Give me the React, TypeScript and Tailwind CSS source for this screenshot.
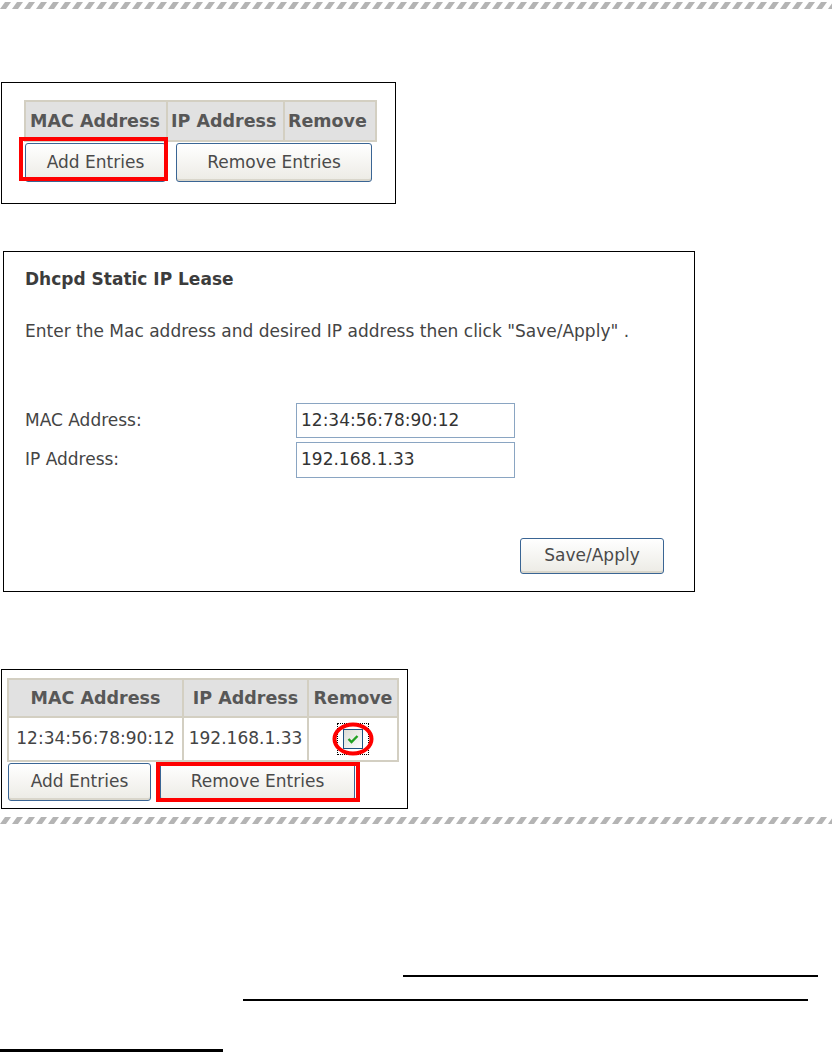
import React from 'react'

const font = { fontFamily: '"DejaVu Sans", Verdana, sans-serif' }

const Stripe = ({ id }: { id: string }) => (
  <svg width="832" height="7" className="block">
    <defs>
      <pattern id={id} width="12" height="7" patternUnits="userSpaceOnUse">
        <polygon points="0,7 5,0 11,0 6,7" fill="#b4b4b4" />
      </pattern>
    </defs>
    <rect width="832" height="7" fill={`url(#${id})`} />
  </svg>
)

const Btn = ({ children, className = '' }: { children: React.ReactNode; className?: string }) => (
  <button
    className={
      'flex items-center justify-center rounded-[3px] border border-[#3a6594] bg-gradient-to-b from-white to-[#ecebe5] text-[17px] text-[#4a4a4a] shadow-[inset_0_-2px_0_#d9d6cb] ' +
      className
    }
  >
    {children}
  </button>
)

const Head = ({ children, className = '' }: { children: React.ReactNode; className?: string }) => (
  <div className={'flex items-center bg-[#e1e1e1] text-[17.5px] font-bold text-[#575757] ' + className}>{children}</div>
)

// checked box with dotted focus ring and the red callout ellipse
const Checkbox = () => (
  <span className="relative inline-flex border border-dotted border-black p-[5px]">
    <span className="flex h-[20px] w-[20px] items-center justify-center border border-[#1c5180] bg-gradient-to-br from-[#dcdcd5] to-white">
      <svg width="12" height="10" viewBox="0 0 12 10">
        <path d="M1.5 5 L4.5 8 L10.5 2" fill="none" stroke="#21a121" strokeWidth="2.4" />
      </svg>
    </span>
    <svg className="absolute left-[-6px] top-[-2px]" width="43" height="34" viewBox="0 0 43 34">
      <ellipse cx="21" cy="17" rx="18.5" ry="14.5" fill="none" stroke="#ff0000" strokeWidth="4" />
    </svg>
  </span>
)

export default function App() {
  return (
    <div className="relative h-[1053px] w-[832px] overflow-hidden bg-white" style={font}>
      <div className="pt-[2px]">
        <Stripe id="s1" />
      </div>

      {/* entries table (empty) */}
      <div className="ml-[1px] mt-[73px] h-[122px] w-[395px] border border-black pl-[22px] pt-[17px]">
        <div className="grid h-[42px] w-[353px] grid-cols-[140px_115px_90px] gap-[2px] bg-[#d3cfc2] p-[2px]">
          <Head className="pl-[4px]">MAC Address</Head>
          <Head className="pl-[3px]">IP Address</Head>
          <Head className="pl-[3px]">Remove</Head>
        </div>
        <div className="mt-[1px] flex">
          <div className="relative ml-[1px]">
            <Btn className="h-[39px] w-[141px]">Add Entries</Btn>
            <div className="absolute -left-[6px] -right-[2px] -top-[6px] bottom-[1px] border-4 border-[#ff0000]" />
          </div>
          <Btn className="ml-[10px] h-[39px] w-[196px]">Remove Entries</Btn>
        </div>
      </div>

      {/* static lease form */}
      <div className="ml-[3px] mt-[47px] h-[341px] w-[692px] border border-black pl-[21px] pt-[16px] text-[17px] text-[#444]">
        <div className="text-[17px] font-bold leading-[22px] text-[#3c3c3c]">Dhcpd Static IP Lease</div>
        <div className="mt-[30px] leading-[22px]">Enter the Mac address and desired IP address then click "Save/Apply" .</div>
        <div className="mt-[61px] grid grid-cols-[271px_219px] gap-y-[4px]">
          <div className="flex h-[35px] items-center">MAC Address:</div>
          <div className="flex h-[35px] items-center border border-[#8aa5c2] pl-[4px] text-[#333]">12:34:56:78:90:12</div>
          <div className="flex h-[35px] items-center">IP Address:</div>
          <div className="flex h-[36px] items-center border border-[#8aa5c2] pl-[4px] text-[#333]">192.168.1.33</div>
        </div>
        <div className="mt-[60px] flex justify-end pr-[30px]">
          <Btn className="h-[36px] w-[144px]">Save/Apply</Btn>
        </div>
      </div>

      {/* entries table (one row) */}
      <div className="ml-[1px] mt-[77px] h-[140px] w-[407px] border border-black pl-[5px] pt-[8px]">
        <div className="grid w-[392px] grid-cols-[173px_123px_88px] grid-rows-[36px_42px] gap-[2px] bg-[#d3cfc2] p-[2px]">
          <Head className="justify-center">MAC Address</Head>
          <Head className="justify-center">IP Address</Head>
          <Head className="justify-center">Remove</Head>
          <div className="flex items-center justify-center bg-white text-[17px] text-[#444]">12:34:56:78:90:12</div>
          <div className="flex items-center justify-center bg-white text-[17px] text-[#444]">192.168.1.33</div>
          <div className="flex items-center justify-center bg-white">
            <Checkbox />
          </div>
        </div>
        <div className="flex">
          <Btn className="ml-[1px] mt-[1px] h-[38px] w-[143px]">Add Entries</Btn>
          <div className="relative ml-[9px] mt-[1px]">
            <Btn className="h-[38px] w-[195px]">Remove Entries</Btn>
            <div className="absolute -bottom-[1px] -left-[4px] -right-[5px] -top-[1px] border-4 border-[#ff0000]" />
          </div>
        </div>
      </div>

      <div className="mt-[8px]">
        <Stripe id="s2" />
      </div>

      {/* blank underlines */}
      <div className="ml-[403px] mt-[151px] h-[2px] w-[415px] bg-black" />
      <div className="ml-[243px] mt-[22px] h-[2px] w-[565px] bg-black" />
      <div className="mt-[48px] h-[3px] w-[223px] bg-black" />
    </div>
  )
}
